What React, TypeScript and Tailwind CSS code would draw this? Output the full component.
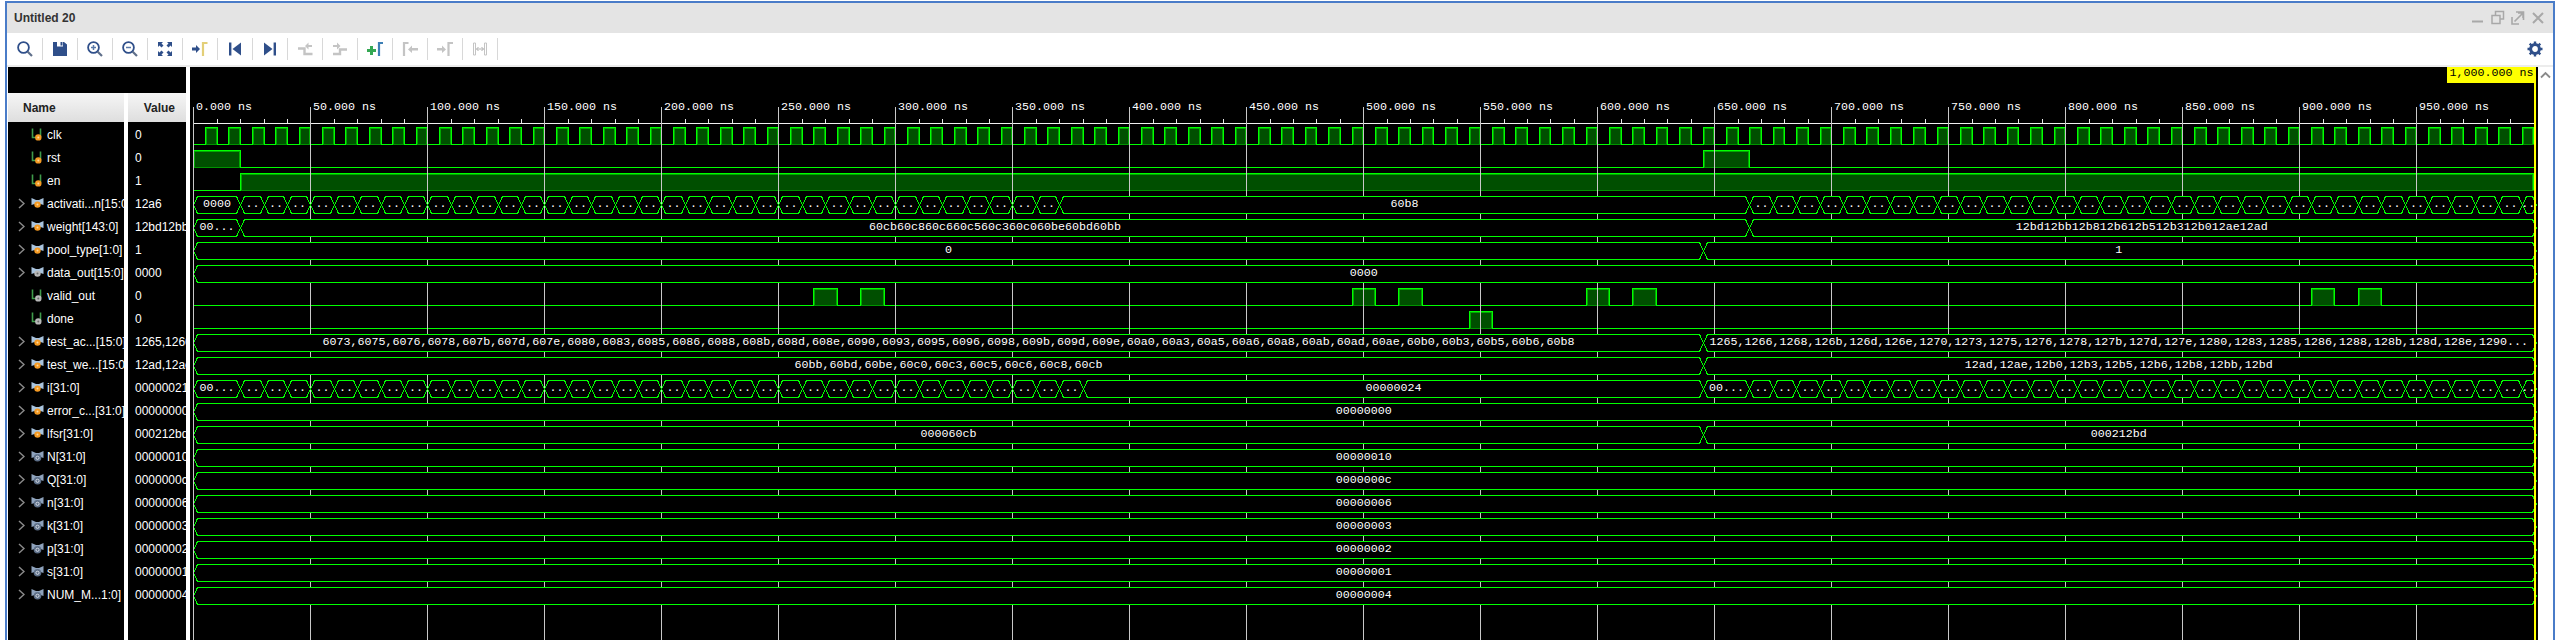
import type { ReactNode } from "react"

const NAVY = "#2f4f8a"
const GREY = "#c4c4c4"
const BRIGHT = "#00ff00"

// time (ns) to x inside the wave pane
const tx = (t: number) => Math.round(193.3 + 2.34 * t)
const rowTop = (i: number) => 127 + 23 * i

type Signal = { name: string; value: string; bus: boolean; dot: "in" | "out" | "const" }

const signals: Signal[] = [
  { name: "clk", value: "0", bus: false, dot: "in" },
  { name: "rst", value: "0", bus: false, dot: "in" },
  { name: "en", value: "1", bus: false, dot: "in" },
  { name: "activati...n[15:0]", value: "12a6", bus: true, dot: "in" },
  { name: "weight[143:0]", value: "12bd12bb", bus: true, dot: "in" },
  { name: "pool_type[1:0]", value: "1", bus: true, dot: "in" },
  { name: "data_out[15:0]", value: "0000", bus: true, dot: "out" },
  { name: "valid_out", value: "0", bus: false, dot: "out" },
  { name: "done", value: "0", bus: false, dot: "out" },
  { name: "test_ac...[15:0]", value: "1265,1266", bus: true, dot: "in" },
  { name: "test_we...[15:0]", value: "12ad,12ae", bus: true, dot: "in" },
  { name: "i[31:0]", value: "00000021", bus: true, dot: "in" },
  { name: "error_c...[31:0]", value: "00000000", bus: true, dot: "in" },
  { name: "lfsr[31:0]", value: "000212bd", bus: true, dot: "in" },
  { name: "N[31:0]", value: "00000010", bus: true, dot: "const" },
  { name: "Q[31:0]", value: "0000000c", bus: true, dot: "const" },
  { name: "n[31:0]", value: "00000006", bus: true, dot: "const" },
  { name: "k[31:0]", value: "00000003", bus: true, dot: "const" },
  { name: "p[31:0]", value: "00000002", bus: true, dot: "const" },
  { name: "s[31:0]", value: "00000001", bus: true, dot: "const" },
  { name: "NUM_M...1:0]", value: "00000004", bus: true, dot: "const" },
]

type Seg = { a: number; b: number; label: string }

// bus cells of 10ns that only show ".."
function cells(from: number, to: number): Seg[] {
  const out: Seg[] = []
  for (let t = from; t < to; t += 10) out.push({ a: t, b: t + 10, label: ".." })
  return out
}

const LONG_AC_1 =
  "6073,6075,6076,6078,607b,607d,607e,6080,6083,6085,6086,6088,608b,608d,608e,6090,6093,6095,6096,6098,609b,609d,609e,60a0,60a3,60a5,60a6,60a8,60ab,60ad,60ae,60b0,60b3,60b5,60b6,60b8"
const LONG_AC_2 =
  "1265,1266,1268,126b,126d,126e,1270,1273,1275,1276,1278,127b,127d,127e,1280,1283,1285,1286,1288,128b,128d,128e,1290..."

const buses: Record<number, Seg[]> = {
  3: [{ a: 0, b: 20, label: "0000" }, ...cells(20, 370), { a: 370, b: 665, label: "60b8" }, ...cells(665, 1001)],
  4: [
    { a: 0, b: 20, label: "00..." },
    { a: 20, b: 665, label: "60cb60c860c660c560c360c060be60bd60bb" },
    { a: 665, b: 1001, label: "12bd12bb12b812b612b512b312b012ae12ad" },
  ],
  5: [{ a: 0, b: 645, label: "0" }, { a: 645, b: 1001, label: "1" }],
  6: [{ a: 0, b: 1001, label: "0000" }],
  9: [{ a: 0, b: 645, label: LONG_AC_1 }, { a: 645, b: 1001, label: LONG_AC_2 }],
  10: [
    { a: 0, b: 645, label: "60bb,60bd,60be,60c0,60c3,60c5,60c6,60c8,60cb" },
    { a: 645, b: 1001, label: "12ad,12ae,12b0,12b3,12b5,12b6,12b8,12bb,12bd" },
  ],
  11: [
    { a: 0, b: 20, label: "00..." },
    ...cells(20, 380),
    { a: 380, b: 645, label: "00000024" },
    { a: 645, b: 665, label: "00..." },
    ...cells(665, 1001),
  ],
  12: [{ a: 0, b: 1001, label: "00000000" }],
  13: [{ a: 0, b: 645, label: "000060cb" }, { a: 645, b: 1001, label: "000212bd" }],
  14: [{ a: 0, b: 1001, label: "00000010" }],
  15: [{ a: 0, b: 1001, label: "0000000c" }],
  16: [{ a: 0, b: 1001, label: "00000006" }],
  17: [{ a: 0, b: 1001, label: "00000003" }],
  18: [{ a: 0, b: 1001, label: "00000002" }],
  19: [{ a: 0, b: 1001, label: "00000001" }],
  20: [{ a: 0, b: 1001, label: "00000004" }],
}

const clkHighs: [number, number][] = []
for (let t = 5; t < 1000; t += 10) clkHighs.push([t, Math.min(t + 5, 1000)])

const digital: Record<number, [number, number][]> = {
  0: clkHighs,
  1: [[0, 20], [645, 665]],
  2: [[20, 1000]],
  7: [[265, 275], [285, 295], [495, 505], [515, 525], [595, 605], [615, 625], [905, 915], [925, 935]],
  8: [[545, 555]],
}

function Digital({ row, highs }: { row: number; highs: [number, number][] }) {
  const top = rowTop(row)
  const low = top + 17
  const lows: [number, number][] = []
  let cur = 0
  highs.forEach(([a, b]) => {
    if (a > cur) lows.push([cur, a])
    cur = b
  })
  if (cur < 1000) lows.push([cur, 1000])
  return (
    <g>
      {highs.map(([a, b]) => {
        const x1 = tx(a)
        const x2 = tx(b)
        return (
          <g key={a}>
            <rect x={x1} y={top} width={x2 - x1 + 1} height={18} fill="#004f00" />
            <path d={`M${x1 + 1.5} ${low}V${top + 1.5}H${x2 - 0.5}V${low}`} fill="none" stroke="#00a800" />
            <path d={`M${x1} ${low + 0.5}H${x2 + 1}`} stroke="#009400" />
            <path d={`M${x1 + 0.5} ${low}V${top + 0.5}H${x2 + 0.5}V${low}`} fill="none" stroke={BRIGHT} />
          </g>
        )
      })}
      {lows.map(([a, b]) => (
        <path key={a} d={`M${tx(a)} ${low + 0.5}H${tx(b) + 1}`} stroke={BRIGHT} />
      ))}
    </g>
  )
}

function Bus({ row, segs }: { row: number; segs: Seg[] }) {
  const top = rowTop(row) + 0.5
  const bot = top + 17
  const mid = top + 8.5
  return (
    <g>
      {segs.map((s) => {
        const a = tx(s.a) + 0.5
        const b = s.b > 1000 ? 2536.5 : tx(s.b) + 0.5
        const pts = `${a},${mid} ${a + 4},${top} ${b - 4},${top} ${b},${mid} ${b - 4},${bot} ${a + 4},${bot}`
        return (
          <g key={s.a}>
            <polygon points={pts} fill="#000" stroke={BRIGHT} />
            <text
              x={(a + Math.min(b, 2534)) / 2}
              y={top + 10}
              textAnchor="middle"
              className="fill-white font-['Liberation_Mono',monospace] text-[11.67px]"
              shapeRendering="auto"
            >
              {s.label}
            </text>
          </g>
        )
      })}
    </g>
  )
}

function WavePane() {
  const majors = Array.from({ length: 20 }, (_, k) => k)
  const minors = Array.from({ length: 100 }, (_, k) => k).filter((k) => k % 5 !== 0)
  return (
    <svg width={2348} height={573} viewBox="190 67 2348 573" className="block shrink-0 bg-black" shapeRendering="crispEdges">
      {minors.map((k) => (
        <path key={k} d={`M${tx(k * 10) + 0.5} 119V123`} stroke="#e8e8e8" />
      ))}
      <path d="M193 123.5H2534" stroke="#f0f0f0" />
      {Object.entries(digital).map(([r, h]) => (
        <Digital key={r} row={Number(r)} highs={h} />
      ))}
      {majors.map((k) => (
        <path key={k} d={`M${tx(k * 50) + 0.5} 107V640`} stroke="#c8c8c8" />
      ))}
      {majors.map((k) => (
        <text
          key={k}
          x={tx(k * 50) + 3}
          y={110}
          className="fill-white font-['Liberation_Mono',monospace] text-[11.67px]"
          shapeRendering="auto"
        >
          {k * 50}.000 ns
        </text>
      ))}
      {Object.entries(buses).map(([r, s]) => (
        <Bus key={r} row={Number(r)} segs={s} />
      ))}
      <path d="M193.5 107V640" stroke="#c8c8c8" />
      <rect x={2534} y={67} width={2} height={573} fill="#ffff00" />
      <rect x={2447} y={67} width={88} height={16} fill="#ffff00" />
      <text x={2449.5} y={76} className="fill-black font-['Liberation_Mono',monospace] text-[11.67px]" shapeRendering="auto">
        1,000.000 ns
      </text>
    </svg>
  )
}

function SignalIcon({ bus, dot }: { bus: boolean; dot: Signal["dot"] }) {
  const dotFill = dot === "in" ? "#f59a23" : "#b8b8b8"
  return (
    <svg width={14} height={14} viewBox="0 0 14 14" className="shrink-0">
      {bus ? (
        <path d="M0.5 1 L5 3 H8 L12.5 1 V8 L8 6.5 H5 L0.5 8 Z" fill={dot === "const" ? "#8ea2bc" : "#a9c4de"} />
      ) : (
        <path d="M1.5 0.5 V9.5 H6 M9.5 9 V0.5" fill="none" stroke="#3f9b4a" strokeWidth={1.6} />
      )}
      {dot === "const" ? (
        <>
          <circle cx={6.5} cy={7.8} r={3.8} fill="#5d6f88" />
          <circle cx={6.5} cy={7.8} r={1.6} fill="none" stroke="#d5dbe5" strokeWidth={1} />
        </>
      ) : (
        <>
          <circle cx={bus ? 6.5 : 7.3} cy={bus ? 7.6 : 9.4} r={3.2} fill={dotFill} />
          <circle cx={bus ? 6.5 : 7.3} cy={bus ? 7.6 : 9.4} r={1} fill={dot === "in" ? "#fbd9a0" : "#6a6a6a"} />
        </>
      )}
    </svg>
  )
}

function NameRow({ s }: { s: Signal }) {
  return (
    <div className="flex h-[23px] shrink-0 items-center overflow-hidden whitespace-nowrap">
      <div className="flex w-[23px] shrink-0 justify-center pl-[3px]">
        {s.bus && (
          <svg width={7} height={11} viewBox="0 0 7 11">
            <path d="M1 1 L6 5.5 L1 10" fill="none" stroke="#8a8a8a" strokeWidth={1.5} />
          </svg>
        )}
      </div>
      <SignalIcon bus={s.bus} dot={s.dot} />
      <span className="pl-[2px] text-white">{s.name}</span>
    </div>
  )
}

function ToolIcon({ children }: { children: ReactNode }) {
  return (
    <div className="flex h-[22px] w-[35px] items-center justify-center border-r border-[#d8d8d8]">
      <svg width={18} height={18} viewBox="0 0 18 18">
        {children}
      </svg>
    </div>
  )
}

function Lens({ mark }: { mark?: "plus" | "minus" }) {
  return (
    <>
      <circle cx={7.5} cy={7.5} r={5.4} fill="none" stroke={NAVY} strokeWidth={1.8} />
      <path d="M11.5 11.5 L16 16" stroke="#5f6f8a" strokeWidth={2.2} />
      {mark && <path d="M5 7.5H10" stroke="#5a79a8" strokeWidth={1.5} />}
      {mark === "plus" && <path d="M7.5 5V10" stroke="#5a79a8" strokeWidth={1.5} />}
    </>
  )
}

function Toolbar() {
  return (
    <div className="flex h-[32px] items-center bg-white pl-[1px]">
      <ToolIcon>
        <Lens />
      </ToolIcon>
      <ToolIcon>
        <path d="M2 2H6V6.5H12V2H13L16 4.5V16H2Z" fill={NAVY} />
        <rect x={9.5} y={2} width={2} height={3.5} fill={NAVY} />
      </ToolIcon>
      <ToolIcon>
        <Lens mark="plus" />
      </ToolIcon>
      <ToolIcon>
        <Lens mark="minus" />
      </ToolIcon>
      <ToolIcon>
        <path d="M2 2H7L5.5 3.5L7.5 5.5L5.5 7.5L3.5 5.5L2 7Z" fill={NAVY} />
        <path d="M16 2H11L12.5 3.5L10.5 5.5L12.5 7.5L14.5 5.5L16 7Z" fill={NAVY} />
        <path d="M2 16H7L5.5 14.5L7.5 12.5L5.5 10.5L3.5 12.5L2 11Z" fill={NAVY} />
        <path d="M16 16H11L12.5 14.5L10.5 12.5L12.5 10.5L14.5 12.5L16 11Z" fill={NAVY} />
      </ToolIcon>
      <ToolIcon>
        <path d="M1 7.5H5V5L9 9L5 13V10.5H1Z" fill={NAVY} />
        <path d="M12 16V3H16.5" fill="none" stroke="#e3cf78" strokeWidth={2.2} />
      </ToolIcon>
      <ToolIcon>
        <rect x={3} y={2.5} width={2.4} height={13} fill={NAVY} />
        <path d="M15 2.5V15.5L6.5 9Z" fill={NAVY} />
      </ToolIcon>
      <ToolIcon>
        <rect x={12.6} y={2.5} width={2.4} height={13} fill={NAVY} />
        <path d="M3 2.5V15.5L11.5 9Z" fill={NAVY} />
      </ToolIcon>
      <ToolIcon>
        <path d="M2 8.5H8.5V14H16.5" fill="none" stroke={GREY} strokeWidth={2.4} />
        <path d="M16 5H12.5V2.5L9 6L12.5 9.5V7H16Z" fill={GREY} />
      </ToolIcon>
      <ToolIcon>
        <path d="M2 14H9V9.5H16" fill="none" stroke={GREY} strokeWidth={2.4} />
        <path d="M2 5H6V2.5L9.5 6L6 9.5V7H2Z" fill={GREY} />
      </ToolIcon>
      <ToolIcon>
        <path d="M1 9H4V6H7V9H10V12H7V15H4V12H1Z" fill="#34a853" />
        <path d="M13 16V3H17" fill="none" stroke="#3d7fb5" strokeWidth={2.2} />
      </ToolIcon>
      <ToolIcon>
        <path d="M3 16V3H7.5" fill="none" stroke={GREY} strokeWidth={2.2} />
        <path d="M17 8H11V5.5L7 9.5L11 13V10.5H17Z" fill={GREY} />
      </ToolIcon>
      <ToolIcon>
        <path d="M1 8H6V5.5L10 9.5L6 13V10.5H1Z" fill={GREY} />
        <path d="M12.5 16V3H17" fill="none" stroke={GREY} strokeWidth={2.2} />
      </ToolIcon>
      <ToolIcon>
        <path d="M2.5 3H4.5V15H2.5ZM13.5 3H15.5V15H13.5Z" fill="none" stroke={GREY} strokeWidth={1} />
        <path d="M5.5 9H12.5M5.5 9L7.5 7M5.5 9L7.5 11M12.5 9L10.5 7M12.5 9L10.5 11" fill="none" stroke="#b0b0b0" strokeWidth={1} />
      </ToolIcon>
      <div className="ml-auto mr-[10px] flex items-center">
        <svg width={16} height={16} viewBox="0 0 16 16">
          <circle cx={8} cy={8} r={4.4} fill="none" stroke={NAVY} strokeWidth={3} />
          <path
            d="M8 0.5V3M8 13V15.5M0.5 8H3M13 8H15.5M2.7 2.7L4.5 4.5M11.5 11.5L13.3 13.3M13.3 2.7L11.5 4.5M4.5 11.5L2.7 13.3"
            stroke={NAVY}
            strokeWidth={2.4}
          />
        </svg>
      </div>
    </div>
  )
}

function TitleBar() {
  return (
    <div className="flex h-[30px] items-center bg-[#e4e4e4] pl-[7px] pr-[7px]">
      <span className="text-[12px] font-bold text-[#333333]">Untitled 20</span>
      <div className="ml-auto flex items-center gap-[4px]">
        <svg width={16} height={16} viewBox="0 0 16 16">
          <path d="M2 11.5H13" stroke="#a8a8a8" strokeWidth={2} />
        </svg>
        <svg width={16} height={16} viewBox="0 0 16 16">
          <path d="M5.5 5V1.5H13.5V9H10.5M2 5.5H10V13.5H2Z" fill="none" stroke="#a8a8a8" strokeWidth={1.5} />
        </svg>
        <svg width={16} height={16} viewBox="0 0 16 16">
          <path d="M6 2H13.5V10M2 7V14H9M4.5 11.5L13 3M8 3H13V8" fill="none" stroke="#a8a8a8" strokeWidth={1.6} />
        </svg>
        <svg width={16} height={16} viewBox="0 0 16 16">
          <path d="M3 3L13 13M13 3L3 13" fill="none" stroke="#a8a8a8" strokeWidth={2} />
        </svg>
      </div>
    </div>
  )
}

function ColumnHead({ label, className }: { label: string; className: string }) {
  return (
    <div
      className={`flex h-[29px] items-center bg-gradient-to-b from-[#f6f6f6] to-[#dedede] text-[12px] font-bold text-[#222222] ${className}`}
    >
      {label}
    </div>
  )
}

export default function App() {
  return (
    <div className="h-[640px] w-[2560px] overflow-hidden bg-white pl-[5px] pr-[5px] pt-[1px] font-['Liberation_Sans',sans-serif] text-[12px]">
      <div className="h-[639px] w-[2550px] border-x-2 border-t-2 border-[#4a7cc8]">
        <TitleBar />
        <Toolbar />
        <div className="h-[2px] bg-[#ececec]" />
        <div className="flex h-[573px] bg-white pl-[1px]">
          <div className="flex w-[178px] shrink-0 flex-col bg-black">
            <div className="h-[26px] shrink-0" />
            <div className="flex flex-1 bg-white">
              <div className="w-[116px] shrink-0 overflow-hidden bg-black">
                <ColumnHead label="Name" className="pl-[15px]" />
                <div className="pt-[1px]">
                  {signals.map((s) => (
                    <NameRow key={s.name} s={s} />
                  ))}
                </div>
              </div>
              <div className="ml-[4px] w-[58px] shrink-0 overflow-hidden bg-black">
                <ColumnHead label="Value" className="justify-end pr-[11px]" />
                <div className="pt-[1px]">
                  {signals.map((s) => (
                    <div key={s.name} className="flex h-[23px] items-center whitespace-nowrap pl-[7px] text-white">
                      {s.value}
                    </div>
                  ))}
                </div>
              </div>
            </div>
          </div>
          <div className="w-[4px] shrink-0" />
          <WavePane />
          <div className="flex flex-1 justify-center pt-[4px]">
            <svg width={11} height={8} viewBox="0 0 11 8">
              <path d="M1 6.5L5.5 2L10 6.5" fill="none" stroke="#8a8a8a" strokeWidth={1.8} />
            </svg>
          </div>
        </div>
      </div>
    </div>
  )
}
